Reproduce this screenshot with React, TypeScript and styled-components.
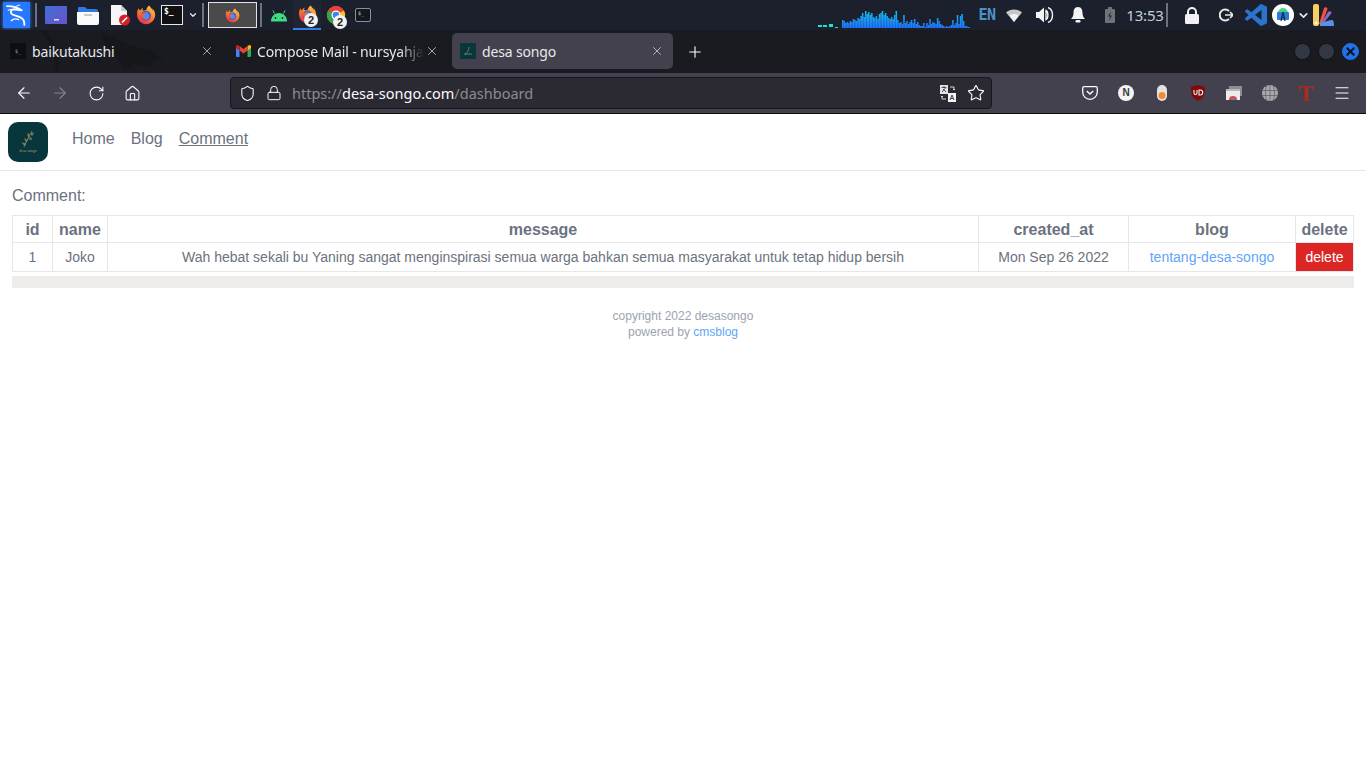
import React from "react";
import styled, { createGlobalStyle } from "styled-components";
import { ArrowLeft, ArrowRight, ChevronDown, House, Lock, Menu, Plus, RotateCw, Shield, Star, X } from "lucide-react";

const GlobalStyle = createGlobalStyle`
  html, body { margin: 0; padding: 0; background: #fff; }
  body { font-family: "Liberation Sans", Arial, sans-serif; overflow: hidden; }
  * { box-sizing: border-box; }
`;

const Screen = styled.div`
  width: 1366px;
  height: 768px;
  display: flex;
  flex-direction: column;
  background: #fff;
`;

/* ---------- desktop panel ---------- */

const Panel = styled.div`
  height: 30px;
  flex: none;
  display: flex;
  align-items: center;
  background: #1b202c;
`;

const Slot = styled.div<{ $w: number; $active?: boolean }>`
  position: relative;
  flex: none;
  width: ${({ $w }) => $w}px;
  height: 30px;
  display: flex;
  align-items: center;
  justify-content: center;
  ${({ $active }) => ($active ? "background: #1f2533; border-bottom: 2px solid #2f80ed;" : "")}
`;

const Spacer = styled.div<{ $w: number }>`
  flex: none;
  width: ${({ $w }) => $w}px;
`;

const Sep = styled.div`
  width: 2px;
  height: 24px;
  background: #6d7280;
`;

const KaliButton = styled.div`
  width: 27px;
  height: 26px;
  background: #2777ff;
  box-shadow: 0 0 4px #2f7cf0;
  display: flex;
  align-items: center;
  justify-content: center;
`;

const TerminalBox = styled.div`
  width: 22px;
  height: 20px;
  background: #111;
  border: 1px solid #e8e8e8;
  color: #fff;
  font: bold 8px "DejaVu Sans Mono", monospace;
  padding: 1px 0 0 2px;
  line-height: 10px;
`;

const SmallTerminal = styled.div`
  width: 16px;
  height: 14px;
  background: #14171d;
  border: 1px solid #8b8e94;
  border-radius: 2px;
  color: #ddd;
  font: 5px "DejaVu Sans Mono", monospace;
  line-height: 8px;
  padding-left: 2px;
`;

const TaskButton = styled.div`
  width: 49px;
  height: 26px;
  background: #4a4a4a;
  border: 1px solid #e3e3e3;
  display: flex;
  align-items: center;
  justify-content: center;
`;

const CountBadge = styled.span`
  position: absolute;
  left: 50%;
  bottom: 1px;
  margin-left: -3px;
  width: 14px;
  height: 14px;
  border-radius: 50%;
  background: #f2f2f2;
  color: #222;
  font: bold 11px/14px "Liberation Sans", sans-serif;
  text-align: center;
`;

const Layout = styled.span`
  color: #4c93c9;
  font: bold 15px "DejaVu Sans Mono", monospace;
  letter-spacing: -0.5px;
`;

const Clock = styled.span`
  color: #c5ced9;
  font: 15px "Noto Sans", sans-serif;
  letter-spacing: -0.2px;
`;

const WhiteDisc = styled.div`
  width: 22px;
  height: 22px;
  border-radius: 50%;
  background: #fff;
  display: flex;
  align-items: center;
  justify-content: center;
`;

/* ---------- tab strip ---------- */

const TabStrip = styled.div`
  position: relative;
  height: 43px;
  flex: none;
  display: flex;
  align-items: center;
  padding-left: 2px;
  background: #1a1b20;
  font: 14px "Noto Sans", sans-serif;
`;

const Dragon = styled.svg`
  position: absolute;
  left: 0;
  top: 0;
`;

const Tab = styled.div<{ $w: number; $active?: boolean }>`
  position: relative;
  flex: none;
  width: ${({ $w }) => $w}px;
  height: 36px;
  margin-top: -1px;
  display: flex;
  align-items: center;
  padding: 0 ${({ $active }) => ($active ? 8 : 12)}px 0 8px;
  border-radius: 5px;
  color: #e8e8ea;
  background: ${({ $active }) => ($active ? "#42414d" : "transparent")};
`;

const Favicon = styled.div<{ $bg: string }>`
  flex: none;
  width: 16px;
  height: 16px;
  background: ${({ $bg }) => $bg};
  display: flex;
  align-items: center;
  justify-content: center;
  color: #aaa;
  font: 5px "DejaVu Sans Mono", monospace;
`;

const TabTitle = styled.span<{ $fade?: boolean }>`
  flex: 1;
  margin-left: 6px;
  white-space: nowrap;
  letter-spacing: -0.15px;
  ${({ $fade }) =>
    $fade
      ? `-webkit-mask-image: linear-gradient(to right, #000 85%, transparent 100%);
         mask-image: linear-gradient(to right, #000 85%, transparent 100%);`
      : ""}
`;

const TabClose = styled.div`
  flex: none;
  width: 16px;
  display: flex;
  justify-content: center;
  color: #e4e4e6;
`;

const NewTab = styled.div`
  flex: none;
  width: 44px;
  display: flex;
  justify-content: center;
  color: #fbfbfe;
`;

const WindowDot = styled.div<{ $close?: boolean }>`
  width: 17px;
  height: 17px;
  border-radius: 50%;
  margin-right: 7px;
  background: ${({ $close }) => ($close ? "#2470e8" : "#333944")};
  border: 1px solid ${({ $close }) => ($close ? "#2470e8" : "#101216")};
  display: flex;
  align-items: center;
  justify-content: center;
  color: #10131a;
`;

const WindowDots = styled.div`
  margin-left: auto;
  display: flex;
`;

/* ---------- toolbar ---------- */

const Toolbar = styled.div`
  height: 41px;
  flex: none;
  display: flex;
  align-items: center;
  padding-left: 6px;
  background: #42414d;
  border-bottom: 1px solid #0c0c0d;
`;

const ToolButton = styled.div<{ $dim?: boolean }>`
  flex: none;
  width: 36px;
  height: 32px;
  display: flex;
  align-items: center;
  justify-content: center;
  color: ${({ $dim }) => ($dim ? "#85848c" : "#fbfbfe")};
`;

const UrlBar = styled.div`
  flex: none;
  width: 762px;
  height: 32px;
  margin: 0 80px;
  display: flex;
  align-items: center;
  background: #2b2a33;
  border: 1px solid #17161c;
  border-radius: 4px;
  padding: 0 1px 0 7px;
  color: #fbfbfe;
`;

const UrlIcon = styled.div<{ $w: number }>`
  flex: none;
  width: ${({ $w }) => $w}px;
  display: flex;
  justify-content: center;
`;

const UrlText = styled.div`
  flex: 1;
  font: 14.500px "Noto Sans", sans-serif;
  color: #8b8a92;
  white-space: nowrap;
`;

const UrlHost = styled.span`
  color: #fbfbfe;
`;

const NoteBadge = styled.div`
  width: 16px;
  height: 16px;
  border-radius: 50%;
  background: #f4f4f4;
  color: #3a3a3a;
  font: bold 10px/16px "Liberation Sans", sans-serif;
  text-align: center;
`;

const RedT = styled.span`
  font: bold 23px/1 "Liberation Serif", serif;
  color: #a82c1c;
`;

/* ---------- web page ---------- */

const SiteNav = styled.nav`
  height: 57px;
  flex: none;
  display: flex;
  align-items: center;
  padding: 0 8px 1px;
  border-bottom: 1px solid #e5e7eb;
`;

const Logo = styled.div`
  width: 40px;
  height: 40px;
  border-radius: 10px;
  background: #08363d;
  color: #a59a6a;
  font: 4px/5px "Liberation Serif", serif;
  display: flex;
  flex-direction: column;
  align-items: center;
  justify-content: center;
`;

const NavLinks = styled.div`
  align-self: flex-start;
  margin: 13px 0 0 24px;
  display: flex;
  gap: 16px;
`;

const NavLink = styled.a<{ $current?: boolean }>`
  font-size: 16px;
  line-height: 24px;
  color: #6b7280;
  text-decoration: ${({ $current }) => ($current ? "underline" : "none")};
`;

const Main = styled.main`
  padding: 13px 12px 0;
`;

const Heading = styled.div`
  font-size: 16px;
  line-height: 24px;
  color: #6b7280;
  margin-bottom: 7px;
`;

const Table = styled.table`
  width: 1341px;
  table-layout: fixed;
  border-collapse: collapse;
  color: #6b7280;
  text-align: center;
`;

const HeadCell = styled.th<{ $w: number }>`
  width: ${({ $w }) => $w}px;
  height: 27px;
  padding: 1px 0 0;
  border: 1px solid #e5e7eb;
  font-size: 16px;
  font-weight: bold;
`;

const Cell = styled.td<{ $danger?: boolean }>`
  height: 29px;
  padding: 0;
  border: 1px solid #e5e7eb;
  font-size: 14px;
  ${({ $danger }) => ($danger ? "background: #dc2626; color: #fff;" : "")}
`;

const BlogLink = styled.a`
  color: #60a5fa;
`;

const ScrollTrack = styled.div`
  height: 12px;
  margin-top: 4px;
  background: #eeedeb;
`;

const Footer = styled.footer`
  margin-top: 20px;
  text-align: center;
  font-size: 12px;
  line-height: 16px;
  color: #9ca3af;
`;

/* ---------- drawn icons ---------- */

const Firefox = ({ size = 22 }: { size?: number }) => (
  <svg width={size} height={size} viewBox="0 0 24 24">
    <defs>
      <linearGradient id="ffx" x1="0.8" y1="0" x2="0.2" y2="1">
        <stop offset="0" stopColor="#ffcb3d" />
        <stop offset="0.5" stopColor="#ff7a2b" />
        <stop offset="1" stopColor="#e9274f" />
      </linearGradient>
    </defs>
    <path d="M22.5 9c-.5-2-1.8-4.3-3-5.2.8 1.5 1.2 2.9 1.3 3.8C19.4 4 16.7 2.500 16 .6c-2.600 1.500-3.500 4-3.600 5.300-1.200.1-2.200.4-3 1-.6-.4-1.300-.6-2-.4.6-1 .9-2 .7-3.300C6.500 4.300 5.400 5.700 5 7c-1-1-1.700-2.200-1.800-3C1.800 6 1 8.500 1.300 12c0 6 5 11 10.800 11C17.800 23 23 18 23 12c0-1-.2-2-.5-3z" fill="url(#ffx)" />
    <circle cx="12" cy="13" r="6" fill="#3f5fe0" />
    <path d="M6 12c2-3 6-4 9-3-2 0-3 1-3 2 2 0 4 1 4 3s-3 4-5 3c-3-1-5-3-5-5z" fill="#f2672d" />
    <circle cx="12.500" cy="13" r="3.200" fill="#4d8cf5" />
  </svg>
);

const Chrome = () => (
  <svg width="20" height="20" viewBox="0 0 24 24">
    <circle cx="12" cy="12" r="11" fill="#e64335" />
    <path d="M12 12 21.500 6.500A11 11 0 0 1 12 23z" fill="#fbc02d" />
    <path d="M12 12 12 23A11 11 0 0 1 2.500 6.500z" fill="#2fa64a" />
    <circle cx="12" cy="12" r="5.500" fill="#fff" />
    <circle cx="12" cy="12" r="4" fill="#3f83ee" />
  </svg>
);

const KaliDragon = () => (
  <svg width="25" height="25" viewBox="0 0 24 24" fill="none" stroke="#fff" strokeWidth="1.800" strokeLinecap="round" strokeLinejoin="round">
    <path d="M3 3c5 0 10 1 14 4l-7-1c-3 0-4 2-3 4 2 3 10 2 12 7 .7 2 .5 4 .5 4" />
    <path d="M14 16c-2-1-5-1-7 1" strokeWidth="1.200" />
    <path d="M7 6 4 7M12 3l3-1" strokeWidth="1" />
  </svg>
);

const Android = () => (
  <svg width="18" height="14" viewBox="0 0 18 14">
    <path d="M1 13.500C1 8.500 4.500 5 9 5s8 3.500 8 8.500z" fill="#3ddc84" />
    <path d="M4.500 5.500 3 2.500M13.500 5.500 15 2.500" stroke="#3ddc84" strokeWidth="1" />
    <circle cx="5.500" cy="10" r=".9" fill="#1b202c" />
    <circle cx="12.500" cy="10" r=".9" fill="#1b202c" />
  </svg>
);

const FolderIcon = () => (
  <svg width="22" height="20" viewBox="0 0 22 20">
    <path d="M1 3a1 1 0 0 1 1-1h6l2 2h9a2 2 0 0 1 2 2v3H1z" fill="#2f79e0" />
    <path d="M0 7h22v11a2 2 0 0 1-2 2H2a2 2 0 0 1-2-2z" fill="#fafafa" />
    <rect x="7" y="9" width="8" height="2" fill="#c8c8c8" />
  </svg>
);

const FileIcon = () => (
  <svg width="22" height="22" viewBox="0 0 22 22">
    <path d="M2 1h10l6 6v14H2z" fill="#f6f6f6" />
    <path d="M12 1l6 6h-6z" fill="#c9c9c9" />
    <circle cx="15.500" cy="16" r="5.500" fill="#d3202a" />
    <path d="M13 18.500l5-5" stroke="#fff" strokeWidth="1.600" />
  </svg>
);

const ScreensIcon = () => (
  <svg width="22" height="18" viewBox="0 0 22 18">
    <defs>
      <linearGradient id="scr" x1="0" y1="0" x2="1" y2="1">
        <stop offset="0" stopColor="#3f6fd8" />
        <stop offset="1" stopColor="#6b53c8" />
      </linearGradient>
    </defs>
    <rect width="22" height="18" rx="1" fill="url(#scr)" />
    <rect x="9" y="13" width="5" height="1.500" fill="#dfe3f5" />
  </svg>
);

const Wifi = () => (
  <svg width="16" height="13" viewBox="0 0 16 13">
    <path d="M0 3.500C4-.500 12-.500 16 3.500L8 13z" fill="#c7c7c7" />
    <path d="M3.500 6.500c2.500-2 6.500-2 9 0L8 13z" fill="#f3f3f3" />
  </svg>
);

const Speaker = () => (
  <svg width="18" height="16" viewBox="0 0 18 16" fill="#f4f4f4">
    <path d="M0 5h3l5-4.500v15L3 11H0z" />
    <path d="M10 3.500c2.500 1 2.500 8 0 9zM12 .5c6 2 6 13 0 15" stroke="#f4f4f4" strokeWidth="1.400" fill="none" />
  </svg>
);

const Bell = () => (
  <svg width="14" height="16" viewBox="0 0 14 16" fill="#f4f4f4">
    <path d="M7 0c3.500 0 4.500 3 4.500 6 0 3 1 4.500 2.500 6H0c1.500-1.500 2.500-3 2.500-6C2.500 3 3.500 0 7 0z" />
    <rect x="4.500" y="13" width="5" height="2.500" rx="1.200" />
  </svg>
);

const Battery = () => (
  <svg width="10" height="16" viewBox="0 0 10 16">
    <rect x="3" width="4" height="2" fill="#6f7277" />
    <rect y="2" width="10" height="14" rx="1" fill="#6f7277" />
    <path d="M6 4 3 9.500h2L4 14l3-5.500H5z" fill="#2a2d33" />
  </svg>
);

const PanelLock = () => (
  <svg width="14" height="17" viewBox="0 0 14 17">
    <path d="M3 8V5a4 4 0 0 1 8 0v3" fill="none" stroke="#f2f2f2" strokeWidth="2" />
    <rect y="7" width="14" height="10" rx="1.500" fill="#f2f2f2" />
  </svg>
);

const Logout = () => (
  <svg width="14" height="14" viewBox="0 0 14 14" fill="none" stroke="#e8e8e8" strokeWidth="2">
    <path d="M10 3a5.500 5.500 0 1 0 0 8" />
    <path d="M6 7h8M11 4l3 3-3 3" strokeWidth="1.600" />
  </svg>
);

const VsCode = () => (
  <svg width="22" height="22" viewBox="0 0 24 24">
    <path fill="#2a74d0" d="M23.150 2.587 18.210.21a1.494 1.494 0 0 0-1.705.29l-9.460 8.630-4.120-3.128a.999.999 0 0 0-1.276.057L.327 7.261A1 1 0 0 0 .326 8.740L3.899 12 .326 15.260a1 1 0 0 0 .001 1.479L1.650 17.940a.999.999 0 0 0 1.276.057l4.120-3.128 9.460 8.630a1.492 1.492 0 0 0 1.704.29l4.942-2.377A1.500 1.500 0 0 0 24 20.060V3.939a1.500 1.500 0 0 0-.850-1.352zm-5.146 14.861L10.826 12l7.178-5.448v10.896z" />
  </svg>
);

const StudioMark = () => (
  <svg width="16" height="16" viewBox="0 0 16 16">
    <path d="M3 6a5 5 0 0 1 10 0z" fill="#3ddc84" />
    <rect x="2" y="5" width="12" height="8" rx="1" fill="#2f7ad6" />
    <path d="M6 14 8 5l2 9M6.800 10.500h2.400" stroke="#0d2f55" strokeWidth="1.200" fill="none" />
  </svg>
);

const Petals = () => (
  <svg width="22" height="24" viewBox="0 0 22 24">
    <path d="M7 21 12 5c.5-1.500 3.500-1 3.500 1L10 21z" fill="#f0524a" />
    <path d="M9 21 16 9c1-1.500 4-.5 3.500 1L11 21z" fill="#8f6ac8" />
    <path d="M8 23v-3l11-3c2-.5 3 1 3 6z" fill="#5a90e8" />
    <rect x="1" y="1" width="6" height="22" rx="2" fill="#f6cf5f" />
    <circle cx="4" cy="20" r="1.500" fill="#fff" />
  </svg>
);

const Translate = () => (
  <svg width="16" height="17" viewBox="0 0 16 17">
    <rect width="8" height="9" fill="#e2e2e4" />
    <path d="M1.500 2.500h5M4 1v2M2 7l3.500-4M3 4l3 3" stroke="#333" strokeWidth=".8" fill="none" />
    <rect x="8" y="8" width="8" height="9" fill="#f4f4f4" />
    <path d="M10 15l2-5 2 5M10.800 13.500h2.400" stroke="#333" strokeWidth=".9" fill="none" />
    <path d="M10 2h4v3M13 4l1 1 1-1M6 14H2v-3M1 12l1-1 1 1" stroke="#e8e8e8" strokeWidth=".9" fill="none" />
  </svg>
);

const Pocket = () => (
  <svg width="16" height="14" viewBox="0 0 16 14" fill="none" stroke="#fbfbfe" strokeWidth="1.300">
    <path d="M2 .7h12a1.300 1.300 0 0 1 1.300 1.300v4a7.300 7.300 0 0 1-14.600 0V2A1.300 1.300 0 0 1 2 .7z" />
    <path d="M4.800 5 8 8l3.200-3" strokeWidth="1.500" />
  </svg>
);

const Capsule = () => (
  <svg width="10" height="16" viewBox="0 0 10 16">
    <rect width="10" height="16" rx="5" fill="#e3e3e3" />
    <circle cx="5" cy="10.500" r="3.500" fill="#f58a30" />
  </svg>
);

const UBlock = () => (
  <svg width="14" height="16" viewBox="0 0 14 16">
    <path d="M7 0 14 2c0 7-1 11-7 14C1 13 0 9 0 2z" fill="#800a0a" />
    <path d="M3 5v3a1.500 1.500 0 0 0 3 0V5M8 5v5h1.200a2.500 2.500 0 0 0 0-5z" fill="none" stroke="#f2f2f2" strokeWidth="1.100" />
  </svg>
);

const Tabs = () => (
  <svg width="16" height="14" viewBox="0 0 16 14">
    <rect x="3" width="13" height="10" fill="#8d8d92" />
    <rect y="3" width="14" height="11" fill="#ececec" />
    <rect y="3" width="14" height="2" fill="#b8b8bc" />
    <path d="M3 14a4 4 0 0 1 8 0z" fill="#e8453c" />
    <path d="M5 14a2 2 0 0 1 4 0z" fill="#4a86e8" />
  </svg>
);

const Globe = () => (
  <svg width="16" height="16" viewBox="0 0 16 16" fill="none">
    <circle cx="8" cy="8" r="8" fill="#a9a9ad" />
    <path d="M0 5.500h16M0 10.500h16M8 0v16M5 .5c-2 4-2 11 0 15M11 .5c2 4 2 11 0 15" stroke="#5a5a62" strokeWidth=".7" />
  </svg>
);

const Gmail = () => (
  <svg width="15" height="12" viewBox="0 0 15 12">
    <path d="M0 2v9a1 1 0 0 0 1 1h2.500V5z" fill="#4285f4" />
    <path d="M15 2v9a1 1 0 0 1-1 1h-2.500V5z" fill="#34a853" />
    <path d="M11.500 1v4.500L15 3V1.500C15 .3 13.600-.3 12.700.4z" fill="#fbbc04" />
    <path d="M3.500 5.500V1L7.500 4l4-3v4.500l-4 3z" fill="#ea4335" />
    <path d="M0 1.500V3l3.500 2.500V1L2.300.4C1.400-.3 0 .3 0 1.500z" fill="#c5221f" />
  </svg>
);

const LogoPlant = () => (
  <svg width="16" height="18" viewBox="0 0 16 18" fill="none" stroke="#a59a6a" strokeWidth=".7">
    <path d="M4 17C6 12 9 6 12 1" />
    <path d="M7.500 11 5 8.500 5.500 11zM8.500 9l3 .5-1-2.500zM9.500 6.500 8 3.500 8 6zM11 3.500l2.500-.5-1.500 2.500zM6 14 2.500 13 4 15z" />
  </svg>
);

const FaviconPlant = () => (
  <svg width="10" height="10" viewBox="0 0 10 10" fill="none" stroke="#7f8e74" strokeWidth=".8">
    <path d="M2 9C4 7 6 4 6 1M1 8h8" />
  </svg>
);

// rough copy of the system monitor wave, one value per column
const waveform = [
  8, 7, 5, 6, 5, 7, 6, 9, 8, 7, 10, 9, 12, 15, 11, 17, 14, 16, 13, 15, 11, 10, 12, 9, 14, 15, 17, 13, 15, 12, 10, 9, 11, 9, 13, 17, 8, 5, 6, 4, 13, 5, 7, 4, 6, 8, 5, 9, 4, 6, 3, 2, 2, 5, 1, 5, 3, 9, 4, 6, 5, 4, 10, 7, 4, 3, 2, 1, 2, 1, 2, 3, 8, 3, 5, 13, 4, 12, 14, 7, 2, 2, 1, 1,
];

const NetGraph = () => (
  <svg width="152" height="30" viewBox="0 0 152 30">
    <defs>
      <linearGradient id="wave" gradientUnits="userSpaceOnUse" x1="0" y1="10" x2="0" y2="28">
        <stop offset="0" stopColor="#12c4ee" />
        <stop offset="1" stopColor="#1d74ff" />
      </linearGradient>
    </defs>
    <path d="M0 27h4v-2H0zM5 27h4v-2H5zM11 27h4v-3h-4zM17 28h3v-1h-3z" fill="#12e8cc" />
    <g fill="url(#wave)">
      {waveform.map((h, i) => (
        <rect key={i} x={24 + i * 1.530} y={28 - h} width={1.530} height={h} />
      ))}
    </g>
  </svg>
);

const App = () => (
  <Screen>
    <GlobalStyle />
    <Panel>
      <Slot $w={32}><KaliButton><KaliDragon /></KaliButton></Slot>
      <Slot $w={8}><Sep /></Slot>
      <Slot $w={32}><ScreensIcon /></Slot>
      <Slot $w={32}><FolderIcon /></Slot>
      <Slot $w={32}><FileIcon /></Slot>
      <Slot $w={20}><Firefox /></Slot>
      <Slot $w={32}><TerminalBox>$_</TerminalBox></Slot>
      <Slot $w={10}><ChevronDown size={14} color="#e8e8e8" strokeWidth={3} /></Slot>
      <Slot $w={10}><Sep /></Slot>
      <Slot $w={49}><TaskButton><Firefox size={15} /></TaskButton></Slot>
      <Slot $w={8}><Sep /></Slot>
      <Slot $w={28}><Android /></Slot>
      <Slot $w={28} $active><Firefox size={19} /><CountBadge>2</CountBadge></Slot>
      <Slot $w={30}><Chrome /><CountBadge>2</CountBadge></Slot>
      <Slot $w={24}><SmallTerminal>$_</SmallTerminal></Slot>
      <Spacer $w={443} />
      <Slot $w={152}><NetGraph /></Slot>
      <Slot $w={34}><Layout>EN</Layout></Slot>
      <Slot $w={20}><Wifi /></Slot>
      <Slot $w={42}><Speaker /></Slot>
      <Slot $w={24}><Bell /></Slot>
      <Slot $w={40}><Battery /></Slot>
      <Slot $w={30}><Clock>13:53</Clock></Slot>
      <Slot $w={14}><Sep /></Slot>
      <Slot $w={36}><PanelLock /></Slot>
      <Slot $w={32}><Logout /></Slot>
      <Slot $w={28}><VsCode /></Slot>
      <Slot $w={26}><WhiteDisc><StudioMark /></WhiteDisc></Slot>
      <Slot $w={14}><ChevronDown size={13} color="#e8e8e8" strokeWidth={3} /></Slot>
      <Slot $w={26}><Petals /></Slot>
    </Panel>

    <TabStrip>
      <Dragon width="170" height="43" viewBox="0 0 170 43" fill="#16171b">
        <path d="M100 2C112 6 122 12 130 15L150 20 165 30 155 30 150 36 135 34 125 40 118 30 105 14Z" />
        <path d="M45 0C55 12 60 25 58 43L55 43C56 25 50 12 40 0Z" />
      </Dragon>
      <Tab $w={225}>
        <Favicon $bg="#0d0e12">$_</Favicon>
        <TabTitle>baikutakushi</TabTitle>
        <TabClose><X size={14} strokeWidth={1.200} /></TabClose>
      </Tab>
      <Tab $w={225}>
        <Favicon $bg="transparent"><Gmail /></Favicon>
        <TabTitle $fade>Compose Mail - nursyahja</TabTitle>
        <TabClose><X size={14} strokeWidth={1.200} /></TabClose>
      </Tab>
      <Tab $w={221} $active>
        <Favicon $bg="#08363d"><FaviconPlant /></Favicon>
        <TabTitle>desa songo</TabTitle>
        <TabClose><X size={14} strokeWidth={1.200} /></TabClose>
      </Tab>
      <NewTab><Plus size={18} strokeWidth={1.500} /></NewTab>
      <WindowDots>
        <WindowDot />
        <WindowDot />
        <WindowDot $close><X size={13} strokeWidth={3.500} /></WindowDot>
      </WindowDots>
    </TabStrip>

    <Toolbar>
      <ToolButton><ArrowLeft size={18} strokeWidth={1.500} /></ToolButton>
      <ToolButton $dim><ArrowRight size={18} strokeWidth={1.500} /></ToolButton>
      <ToolButton><RotateCw size={17} strokeWidth={1.500} /></ToolButton>
      <ToolButton><House size={17} strokeWidth={1.500} /></ToolButton>
      <UrlBar>
        <UrlIcon $w={18}><Shield size={17} strokeWidth={1.500} /></UrlIcon>
        <UrlIcon $w={36}><Lock size={16} strokeWidth={1.500} /></UrlIcon>
        <UrlText>https://<UrlHost>desa-songo.com</UrlHost>/dashboard</UrlText>
        <UrlIcon $w={28}><Translate /></UrlIcon>
        <UrlIcon $w={28}><Star size={18} strokeWidth={1.500} /></UrlIcon>
      </UrlBar>
      <ToolButton><Pocket /></ToolButton>
      <ToolButton><NoteBadge>N</NoteBadge></ToolButton>
      <ToolButton><Capsule /></ToolButton>
      <ToolButton><UBlock /></ToolButton>
      <ToolButton><Tabs /></ToolButton>
      <ToolButton><Globe /></ToolButton>
      <ToolButton><RedT>T</RedT></ToolButton>
      <ToolButton><Menu size={18} strokeWidth={1.500} /></ToolButton>
    </Toolbar>

    <SiteNav>
      <Logo>
        <LogoPlant />
        desa songo
      </Logo>
      <NavLinks>
        <NavLink href="#">Home</NavLink>
        <NavLink href="#">Blog</NavLink>
        <NavLink href="#" $current>Comment</NavLink>
      </NavLinks>
    </SiteNav>

    <Main>
      <Heading>Comment:</Heading>
      <Table>
        <thead>
          <tr>
            <HeadCell $w={40}>id</HeadCell>
            <HeadCell $w={55}>name</HeadCell>
            <HeadCell $w={871}>message</HeadCell>
            <HeadCell $w={150}>created_at</HeadCell>
            <HeadCell $w={167}>blog</HeadCell>
            <HeadCell $w={58}>delete</HeadCell>
          </tr>
        </thead>
        <tbody>
          <tr>
            <Cell>1</Cell>
            <Cell>Joko</Cell>
            <Cell>Wah hebat sekali bu Yaning sangat menginspirasi semua warga bahkan semua masyarakat untuk tetap hidup bersih</Cell>
            <Cell>Mon Sep 26 2022</Cell>
            <Cell><BlogLink>tentang-desa-songo</BlogLink></Cell>
            <Cell $danger>delete</Cell>
          </tr>
        </tbody>
      </Table>
      <ScrollTrack />
      <Footer>
        copyright 2022 desasongo
        <br />
        powered by <BlogLink>cmsblog</BlogLink>
      </Footer>
    </Main>
  </Screen>
);

export default App;
